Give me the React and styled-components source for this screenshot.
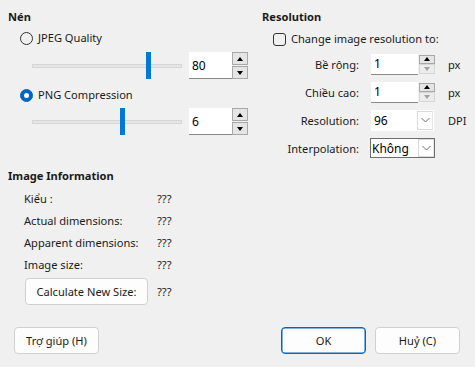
import React from "react";
import styled, { createGlobalStyle } from "styled-components";

const Global = createGlobalStyle`
  html, body { margin: 0; padding: 0; background: #f0f0f0; }
  * { box-sizing: border-box; }
`;

const Dialog = styled.div`
  width: 475px;
  height: 367px;
  background: #f0f0f0;
  font-family: "Noto Sans", "Segoe UI", sans-serif;
  font-size: 11.1px;
  color: #1a1a1a;
  display: flex;
  flex-direction: column;
  overflow: hidden;
`;

const Top = styled.div`
  display: grid;
  grid-template-columns: 254px 1fr;
  padding-left: 8px;
  padding-top: 9px;
`;

const Column = styled.div`
  display: flex;
  flex-direction: column;
`;

const Heading = styled.div`
  font-weight: 700;
  height: 16px;
  line-height: 16px;
  margin-top: ${(p) => p.$mt || 0}px;
`;

const OptionRow = styled.label`
  display: flex;
  align-items: center;
  gap: 5px;
  height: 20px;
  line-height: 20px;
  margin-left: ${(p) => p.$ml || 12}px;
  margin-top: ${(p) => p.$mt || 0}px;
`;

const Radio = styled.span`
  width: 13px;
  height: 13px;
  border-radius: 50%;
  border: 1px solid ${(p) => (p.$checked ? "#0067c0" : "#333")};
  background: ${(p) => (p.$checked ? "#0067c0" : "transparent")};
  display: flex;
  align-items: center;
  justify-content: center;
  &::after {
    content: "";
    display: ${(p) => (p.$checked ? "block" : "none")};
    width: 5px;
    height: 5px;
    border-radius: 50%;
    background: #fff;
  }
`;

const Checkbox = styled.span`
  width: 13px;
  height: 13px;
  border-radius: 3px;
  border: 1px solid #333;
`;

const SliderRow = styled.div`
  display: flex;
  align-items: center;
  height: 27px;
  margin-top: ${(p) => p.$mt || 0}px;
`;

const Slider = styled.div`
  position: relative;
  width: 150px;
  height: 27px;
  margin-left: 24px;
  margin-right: 7px;
`;

const Track = styled.div`
  position: absolute;
  left: 0;
  right: 0;
  top: 12px;
  height: 4px;
  background: #e6e6e6;
  border: 1px solid #d6d6d6;
`;

const Thumb = styled.div`
  position: absolute;
  top: 0;
  width: 5px;
  height: 27px;
  background: #0078d4;
`;

const Spin = styled.div`
  display: flex;
  height: ${(p) => p.$h}px;
`;

const Field = styled.div`
  width: ${(p) => p.$w}px;
  height: 100%;
  background: #fff;
  border-bottom: 1px solid #8a8a8a;
  display: flex;
  align-items: center;
  padding-left: ${(p) => p.$pl ?? 3}px;
  color: #000;
  font-size: 12px;
`;

const SpinButtons = styled.div`
  width: 16px;
  display: flex;
  flex-direction: column;
  gap: ${(p) => p.$gap}px;
  padding: ${(p) => p.$pad}px 0;
  margin-left: ${(p) => p.$ml || 0}px;
`;

const SpinButton = styled.div`
  flex: 1;
  border: 1px solid ${(p) => (p.$disabled ? "#d6d6d6" : "#a8a8a8")};
  background: ${(p) => (p.$disabled ? "#ececec" : "#e5e5e5")};
  display: flex;
  align-items: center;
  justify-content: center;
  &::after {
    content: "";
    width: 0;
    height: 0;
    border-left: 3.5px solid transparent;
    border-right: 3.5px solid transparent;
    ${(p) =>
      p.$down
        ? `border-top: 4px solid ${p.$disabled ? "#a0a0a0" : "#000"};`
        : `border-bottom: 4px solid ${p.$disabled ? "#a0a0a0" : "#000"};`}
  }
`;

const FormGrid = styled.div`
  display: grid;
  grid-template-columns: 97px 64px auto;
  grid-auto-rows: 28px;
  column-gap: 12px;
  align-items: center;
  margin-top: 1px;
`;

const FormLabel = styled.div`
  text-align: right;
`;

const Unit = styled.div`
  padding-left: 1px;
`;

const Combo = styled.div`
  display: flex;
  height: ${(p) => p.$h}px;
  width: ${(p) => p.$w}px;
  background: #fff;
  border: 1px solid ${(p) => (p.$focused ? "#6e6e6e" : "transparent")};
  margin-left: ${(p) => p.$ml || 0}px;
`;

const ComboText = styled.div`
  flex: 1;
  display: flex;
  align-items: center;
  padding-left: ${(p) => p.$pl}px;
  color: #000;
  font-size: 12px;
`;

const ComboButton = styled.div`
  width: 16px;
  border: 1px solid #d9d9d9;
  border-right-color: #e6e6e6;
  display: flex;
  align-items: center;
  justify-content: center;
  color: #777;
`;

const InfoList = styled.div`
  display: flex;
  flex-direction: column;
  padding-left: 16px;
  margin-top: 3px;
`;

const InfoRow = styled.div`
  display: grid;
  grid-template-columns: 133px auto;
  height: 22px;
  align-items: center;
`;

const ButtonRow = styled.div`
  display: flex;
  align-items: center;
  gap: 9px;
  margin-top: 3px;
  margin-left: 1px;
`;

const Button = styled.button`
  font: inherit;
  color: #1a1a1a;
  height: 27px;
  width: ${(p) => p.$w || 85}px;
  background: #fdfdfd;
  border: 1px solid ${(p) => (p.$primary ? "#0067c0" : "#d0d0d0")};
  box-shadow: ${(p) => (p.$primary ? "inset 0 0 0 0.5px #0067c0" : "none")};
  border-radius: 4px;
  padding: 0;
  display: flex;
  align-items: center;
  justify-content: center;
`;

const Footer = styled.div`
  display: flex;
  align-items: center;
  padding: 0 15px 0 14px;
  margin-top: 22px;
  gap: 9px;
`;

const Spacer = styled.div`
  flex: 1;
`;

const Chevron = () => (
  <svg width="9" height="6" viewBox="0 0 9 6">
    <path d="M0.5 1 L4.5 5 L8.5 1" fill="none" stroke="#6e6e6e" strokeWidth="1" />
  </svg>
);

const SmallSpin = ({ value }) => (
  <Spin $h={21}>
    <Field $w={47} $pl={3}>{value}</Field>
    <SpinButtons $gap={0} $pad={1} $ml={1}>
      <SpinButton />
      <SpinButton $down $disabled />
    </SpinButtons>
  </Spin>
);

const BigSpin = ({ value }) => (
  <Spin $h={27}>
    <Field $w={43} $pl={3}>{value}</Field>
    <SpinButtons $gap={1} $pad={0}>
      <SpinButton />
      <SpinButton $down />
    </SpinButtons>
  </Spin>
);

const SliderControl = ({ ratio }) => (
  <Slider>
    <Track />
    <Thumb style={{ left: `${ratio * 145}px` }} />
  </Slider>
);

export default function App() {
  return (
    <>
      <Global />
      <Dialog>
        <Top>
          <Column>
            <Heading>Nén</Heading>
            <OptionRow $mt={3}>
              <Radio />
              JPEG Quality
            </OptionRow>
            <SliderRow $mt={4}>
              <SliderControl ratio={0.786} />
              <BigSpin value="80" />
            </SliderRow>
            <OptionRow $mt={6}>
              <Radio $checked />
              PNG Compression
            </OptionRow>
            <SliderRow $mt={3}>
              <SliderControl ratio={0.607} />
              <BigSpin value="6" />
            </SliderRow>
            <Heading $mt={33}>Image Information</Heading>
            <InfoList>
              <InfoRow><span>Kiểu :</span><span>???</span></InfoRow>
              <InfoRow><span>Actual dimensions:</span><span>???</span></InfoRow>
              <InfoRow><span>Apparent dimensions:</span><span>???</span></InfoRow>
              <InfoRow><span>Image size:</span><span>???</span></InfoRow>
              <ButtonRow>
                <Button $w={123}>Calculate New Size:</Button>
                <span>???</span>
              </ButtonRow>
            </InfoList>
          </Column>
          <Column>
            <Heading>Resolution</Heading>
            <OptionRow $ml={11} $mt={4}>
              <Checkbox />
              Change image resolution to:
            </OptionRow>
            <FormGrid>
              <FormLabel>Bề rộng:</FormLabel>
              <SmallSpin value="1" />
              <Unit>px</Unit>
              <FormLabel>Chiều cao:</FormLabel>
              <SmallSpin value="1" />
              <Unit>px</Unit>
              <FormLabel>Resolution:</FormLabel>
              <Combo $h={21} $w={63}>
                <ComboText $pl={2}>96</ComboText>
                <ComboButton><Chevron /></ComboButton>
              </Combo>
              <Unit>DPI</Unit>
              <FormLabel>Interpolation:</FormLabel>
              <Combo $h={20} $w={65} $focused $ml={-1}>
                <ComboText $pl={1}>Không</ComboText>
                <ComboButton><Chevron /></ComboButton>
              </Combo>
              <span />
            </FormGrid>
          </Column>
        </Top>
        <Footer>
          <Button>Trợ giúp (H)</Button>
          <Spacer />
          <Button $primary>OK</Button>
          <Button>Huỷ (C)</Button>
        </Footer>
      </Dialog>
    </>
  );
}
